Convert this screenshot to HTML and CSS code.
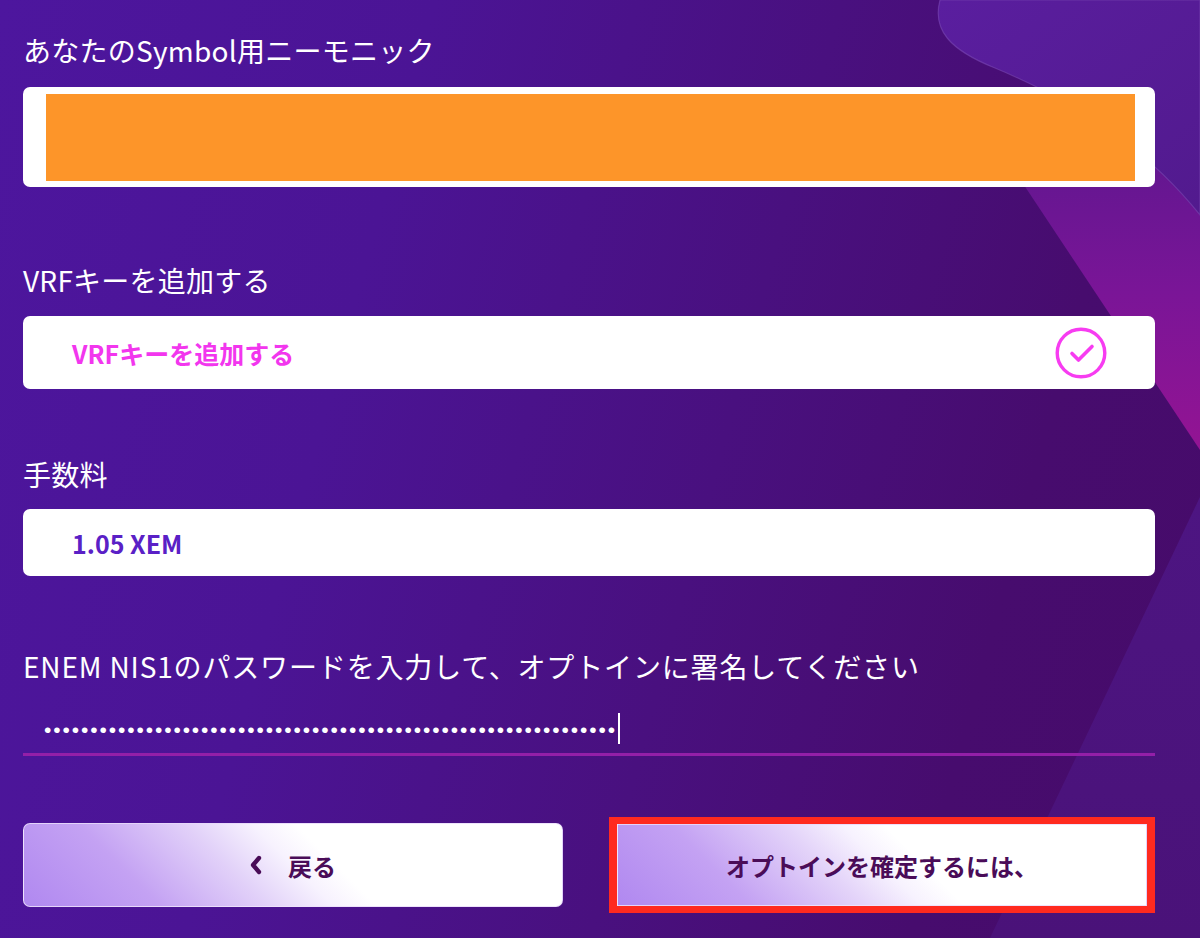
FILE: index.html
```html
<!DOCTYPE html>
<html lang="ja">
<head>
<meta charset="utf-8">
<title>Symbol オプトイン</title>
<link rel="stylesheet" href="styles.css">
</head>
<body>
<div class="page">
  <svg class="bg-art" viewBox="0 0 1200 938" aria-hidden="true">
    <defs>
      <linearGradient id="mag" x1="0" y1="0" x2="0" y2="1">
        <stop offset="0" stop-color="#5e178f"/>
        <stop offset="0.5" stop-color="#7a1597"/>
        <stop offset="1" stop-color="#931493"/>
      </linearGradient>
      <linearGradient id="blob" x1="0" y1="0" x2="1" y2="1">
        <stop offset="0" stop-color="#5a1e9f"/>
        <stop offset="1" stop-color="#521a8e"/>
      </linearGradient>
      <linearGradient id="tri" x1="0" y1="0" x2="0" y2="1">
        <stop offset="0" stop-color="#4d1582"/>
        <stop offset="1" stop-color="#4a1279"/>
      </linearGradient>
    </defs>
    <polygon points="990,134 1200,450 1200,134" fill="url(#mag)"/>
    <polygon points="1200,497 990,938 1200,938" fill="url(#tri)"/>
    <path d="M940 0 C932 30 950 50 995 68 C1060 95 1140 140 1200 215 L1200 0 Z" fill="url(#blob)" stroke="#7b4bb5" stroke-opacity="0.55" stroke-width="1.2"/>
  </svg>

  <main class="form">
    <section class="field">
      <div class="label">あなたのSymbol用ニーモニック</div>
      <div class="box box-mnemonic"><div class="mnemonic-mask"></div></div>
    </section>

    <section class="field field-vrf">
      <div class="label label-vrf">VRFキーを追加する</div>
      <div class="box box-option">
        <span class="option-text">VRFキーを追加する</span>
        <svg class="check" viewBox="0 0 52 52" aria-hidden="true">
          <circle cx="26" cy="26" r="23.8" fill="none" stroke="#f73cf1" stroke-width="3.4"/>
          <path d="M17 26.5 L23.5 33 L37 19.5" fill="none" stroke="#f73cf1" stroke-width="3.6" stroke-linecap="round" stroke-linejoin="round"/>
        </svg>
      </div>
    </section>

    <section class="field field-fee">
      <div class="label label-fee">手数料</div>
      <div class="box box-fee"><span class="fee-text">1.05 XEM</span></div>
    </section>

    <section class="field field-pass">
      <div class="label label-pass">ENEM NIS1のパスワードを入力して、オプトインに署名してください</div>
      <div class="password"><span class="dots">••••••••••••••••••••••••••••••••••••••••••••••••••••••••••••••</span><span class="caret"></span></div>
    </section>

    <div class="actions">
      <button class="btn btn-back" type="button">
        <svg class="chev" viewBox="0 0 12 20" aria-hidden="true"><path d="M9 3 L3 10 L9 17" fill="none" stroke="#4a0c58" stroke-width="4.3" stroke-linecap="round" stroke-linejoin="round"/></svg>
        <span>戻る</span>
      </button>
      <div class="highlight">
        <button class="btn btn-confirm" type="button">オプトインを確定するには、</button>
      </div>
    </div>
  </main>
</div>
</body>
</html>
```

FILE: styles.css
```css
html, body {
  margin: 0;
  padding: 0;
}

body {
  width: 1200px;
  height: 938px;
  overflow: hidden;
  font-family: "Noto Sans CJK JP", "Noto Sans", sans-serif;
}

.page {
  position: relative;
  width: 1200px;
  height: 938px;
  overflow: hidden;
  background: linear-gradient(105deg, #4d169e 0%, #4b1495 30%, #49107f 58%, #470c6e 80%, #460b69 100%);
}

.bg-art {
  position: absolute;
  left: 0;
  top: 0;
  width: 1200px;
  height: 938px;
  z-index: 0;
}

.form {
  position: relative;
  z-index: 1;
  width: 1132px;
  padding: 30px 0 0 23px;
}

.label {
  color: #ffffff;
  font-size: 28px;
  font-weight: 400;
  line-height: 40px;
  height: 40px;
  white-space: nowrap;
  letter-spacing: 0.25px;
  margin-bottom: 17px;
}

.label-vrf {
  margin-bottom: 16px;
}

.label-fee {
  margin-bottom: 15px;
}

.label-pass {
  letter-spacing: 0.85px;
}

.field-vrf {
  margin-top: 73px;
}

.field-fee {
  margin-top: 65px;
}

.field-pass {
  margin-top: 70px;
}

.box {
  background: #ffffff;
  border-radius: 7px;
  box-sizing: border-box;
}

.box-mnemonic {
  height: 100px;
  padding: 7px 20px 6px 23px;
}

.mnemonic-mask {
  height: 100%;
  background: #fd9529;
}

.box-option {
  height: 73px;
  display: flex;
  align-items: center;
  justify-content: space-between;
  padding: 0 48px 0 49px;
}

.option-text {
  color: #f236ee;
  font-size: 25px;
  font-weight: 700;
}

.check {
  width: 52px;
  height: 52px;
  display: block;
}

.box-fee {
  height: 67px;
  display: flex;
  align-items: center;
  padding-left: 49px;
}

.fee-text {
  color: #5a20c6;
  font-size: 25px;
  font-weight: 700;
}

.password {
  margin-top: 17px;
  height: 50px;
  display: flex;
  align-items: center;
  padding-left: 21px;
  border-bottom: 3px solid #941fa8;
}

.dots {
  color: #ffffff;
  font-family: "Liberation Sans", sans-serif;
  font-size: 21px;
  letter-spacing: 1.89px;
  line-height: 30px;
  padding-top: 4px;
}

.caret {
  display: block;
  width: 2px;
  height: 31px;
  background: #ffffff;
  margin-left: 1px;
}

.actions {
  margin-top: 61px;
  display: flex;
  align-items: center;
}

.btn {
  margin: 0;
  padding: 0;
  font-family: "Noto Sans CJK JP", "Noto Sans", sans-serif;
  font-size: 24px;
  font-weight: 700;
  color: #4a0c58;
  border: 1px solid rgba(235, 222, 252, 0.85);
  background: linear-gradient(45deg, #b088f0 0%, #c4a2f3 22%, #e3d3f9 40%, #f7f2fe 50%, #ffffff 57%, #ffffff 100%);
  cursor: pointer;
}

.btn-back {
  width: 542px;
  height: 84px;
  border-radius: 7px;
  display: flex;
  align-items: center;
  justify-content: center;
  gap: 26px;
  box-sizing: border-box;
}

.chev {
  width: 12px;
  height: 20px;
  display: block;
}

.highlight {
  margin-left: 46px;
  width: 548px;
  height: 96px;
  box-sizing: border-box;
  border-style: solid;
  border-color: #ff2a1f;
  border-width: 7px 8px;
}

.btn-confirm {
  display: block;
  width: 100%;
  height: 100%;
  border-radius: 0;
  box-sizing: border-box;
}
```
